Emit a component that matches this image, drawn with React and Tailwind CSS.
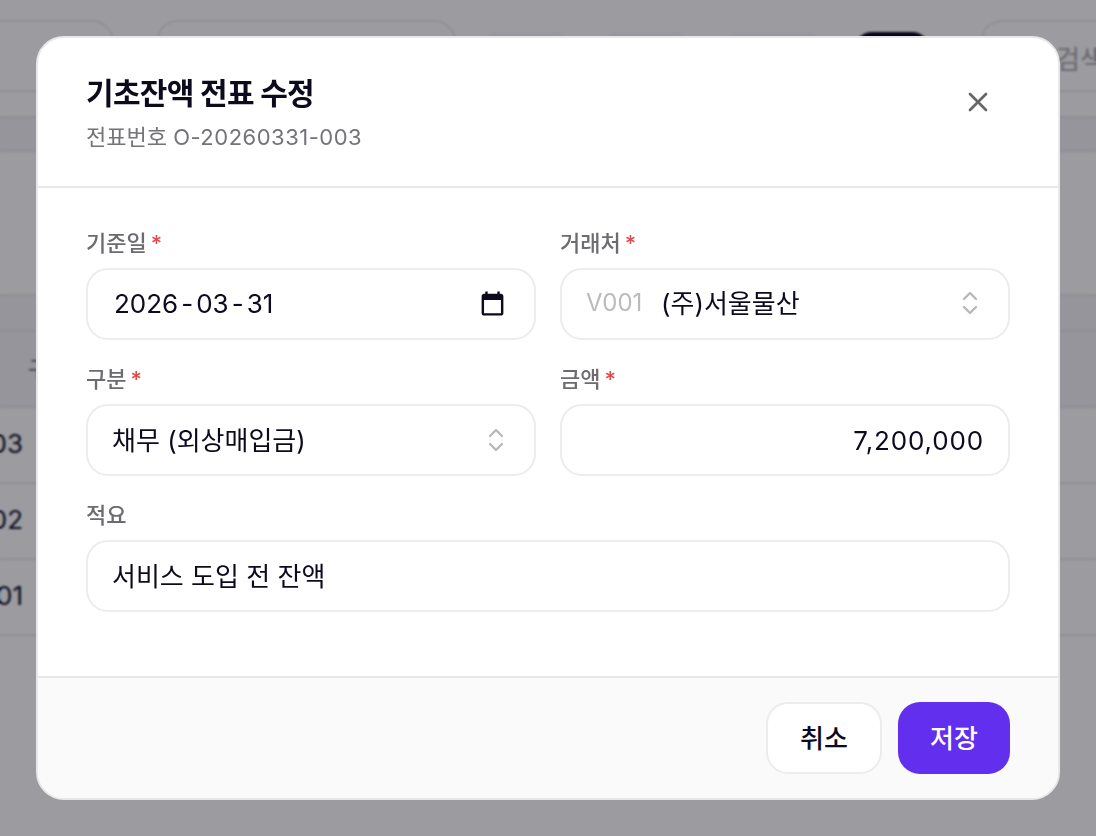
import React from "react";
import { X } from "lucide-react";

const FONT = "font-['Inter','Noto_Sans_CJK_KR',sans-serif]";

const Chevrons = () => (
  <svg width="16" height="24" viewBox="0 0 16 24" fill="none" stroke="#b9b9bc" strokeWidth="2.4" strokeLinecap="round" strokeLinejoin="round">
    <path d="M2 8 8 2l6 6" />
    <path d="M2 16l6 6 6-6" />
  </svg>
);

const CalendarIcon = () => (
  <svg width="29" height="29" viewBox="0 0 24 24" fill="#0c0a1d">
    <path d="M19 4h-1V2h-2v2H8V2H6v2H5c-1.1 0-2 .9-2 2v14c0 1.1.9 2 2 2h14c1.1 0 2-.9 2-2V6c0-1.1-.9-2-2-2zm0 16H5V9h14v11z" />
  </svg>
);

const Field = ({ label, required, children, className = "" }) => (
  <div className={className}>
    <label className="mb-[10px] flex h-[30px] items-center gap-[4px] text-[22px] font-medium text-[#6b6b70]">
      {label}
      {required && <span className="text-[#e5484d]">*</span>}
    </label>
    {children}
  </div>
);

const control =
  "h-[72px] w-full rounded-[22px] border-2 border-[#ececee] bg-white text-[26px] text-[#0c0a1d] outline-none";

const Row = ({ text }) => (
  <div className="flex h-[76px] items-center justify-start border-b-2 border-[#e6e6e8] pb-[4px]">
    <div className="flex w-[23px] justify-end whitespace-nowrap text-[26px] text-[#0c0a1d]">{text}</div>
  </div>
);

export default function App() {
  return (
    <div className={`${FONT} relative h-[836px] w-[1096px] overflow-hidden bg-[#fbfbfb]`}>
      {/* page behind the dialog */}
      <div className="flex h-[92px] items-start border-b-2 border-[#e6e6e8]">
        <div className="-ml-[30px] mt-[20px] h-[72px] w-[144px] shrink-0 rounded-[22px] border-2 border-[#e6e6e8]" />
        <div className="ml-[42px] mt-[20px] h-[72px] w-[300px] shrink-0 rounded-[22px] border-2 border-[#e6e6e8]" />
        <div className="ml-[24px] mt-[32px] h-[48px] w-[90px] shrink-0 rounded-[16px] bg-[#f3f3f5]" />
        <div className="ml-[30px] mt-[32px] h-[48px] w-[90px] shrink-0 rounded-[16px] bg-[#f3f3f5]" />
        <div className="ml-[34px] mt-[32px] h-[48px] w-[100px] shrink-0 rounded-[16px] bg-[#f3f3f5]" />
        <div className="ml-[30px] mt-[32px] h-[48px] w-[76px] shrink-0 rounded-[18px] bg-[#05021a]" />
        <div className="ml-[50px] mt-[20px] flex h-[72px] grow items-start rounded-l-[22px] border-y-2 border-l-2 border-[#e6e6e8] pl-[74px] pt-[18px] text-[26px] whitespace-nowrap text-[#a3a3a8]">
          검색
        </div>
      </div>
      <div className="h-[24px]" />
      <div className="h-[36px] border-y-2 border-[#e6e6e8] bg-[#f0f0f2]" />
      <div className="h-[142px]" />
      <div className="h-[36px] border-t-2 border-[#e6e6e8] bg-[#f0f0f2]" />
      <div className="flex h-[78px] items-center border-y-2 border-[#e6e6e8] bg-[#f0f0f2] pl-[28px] text-[22px] text-[#55555a]">구분</div>
      <Row text="O-20260331-003" />
      <Row text="O-20260331-002" />
      <Row text="O-20260331-001" />

      {/* dialog */}
      <div className="absolute inset-0 flex items-center justify-center bg-[#0d0c18]/40 backdrop-blur-[1px]">
        <div className="flex h-[764px] w-[1024px] flex-col overflow-hidden rounded-[28px] border-2 border-[#e8e8ea] bg-white">
          <div className="flex h-[150px] shrink-0 items-start justify-between border-b-2 border-[#e8e8ea] px-[48px] pt-[37px]">
            <div>
              <h2 className="text-[30px] leading-[36px] font-bold tracking-[-0.7px] text-[#0c0a1d]">기초잔액 전표 수정</h2>
              <p className="mt-[11px] text-[22px] leading-[30px] text-[#737378]">
                전표번호 <span className="tracking-[0.5px]">O-20260331-003</span>
              </p>
            </div>
            <button className="mt-[11px] mr-[16px] text-[#666669]">
              <X size={32} strokeWidth={2} />
            </button>
          </div>

          <div className="flex flex-1 flex-col gap-[24px] px-[48px] pt-[40px]">
            <div className="grid grid-cols-2 gap-[24px]">
              <Field label="기준일" required>
                <div className={`${control} flex items-center justify-between pr-[27px] pb-[2px] pl-[26px]`}>
                  <span>
                    2026<span className="mx-[3px]">-</span>03<span className="mx-[3px]">-</span>31
                  </span>
                  <CalendarIcon />
                </div>
              </Field>
              <Field label="거래처" required>
                <div className={`${control} flex items-center pr-[30px] pb-[2px] pl-[24px]`}>
                  <span className="w-[75px] text-[24px] text-[#bbbbbe]">V001</span>
                  <span className="flex-1">(주)서울물산</span>
                  <Chevrons />
                </div>
              </Field>
            </div>
            <div className="grid grid-cols-2 gap-[24px]">
              <Field label="구분" required>
                <div className="relative">
                  <select defaultValue="AP" className={`${control} appearance-none px-[24px]`}>
                    <option value="AP">채무 (외상매입금)</option>
                  </select>
                  <span className="pointer-events-none absolute top-[24px] right-[32px]">
                    <Chevrons />
                  </span>
                </div>
              </Field>
              <Field label="금액" required>
                <input defaultValue="7,200,000" className={`${control} px-[24px] text-right tracking-[0.85px]`} />
              </Field>
            </div>
            <Field label="적요">
              <input defaultValue="서비스 도입 전 잔액" className={`${control} px-[24px] pb-[4px]`} />
            </Field>
          </div>

          <div className="flex h-[122px] shrink-0 items-center justify-end gap-[16px] border-t-2 border-[#e8e8ea] bg-[#fafafa] px-[48px]">
            <button className="h-[72px] w-[116px] rounded-[22px] border-2 border-[#ececee] bg-white text-[26px] font-medium text-[#0c0a1d]">
              취소
            </button>
            <button className="h-[72px] w-[112px] rounded-[22px] bg-[#632fee] text-[26px] font-medium text-white">
              저장
            </button>
          </div>
        </div>
      </div>
    </div>
  );
}
